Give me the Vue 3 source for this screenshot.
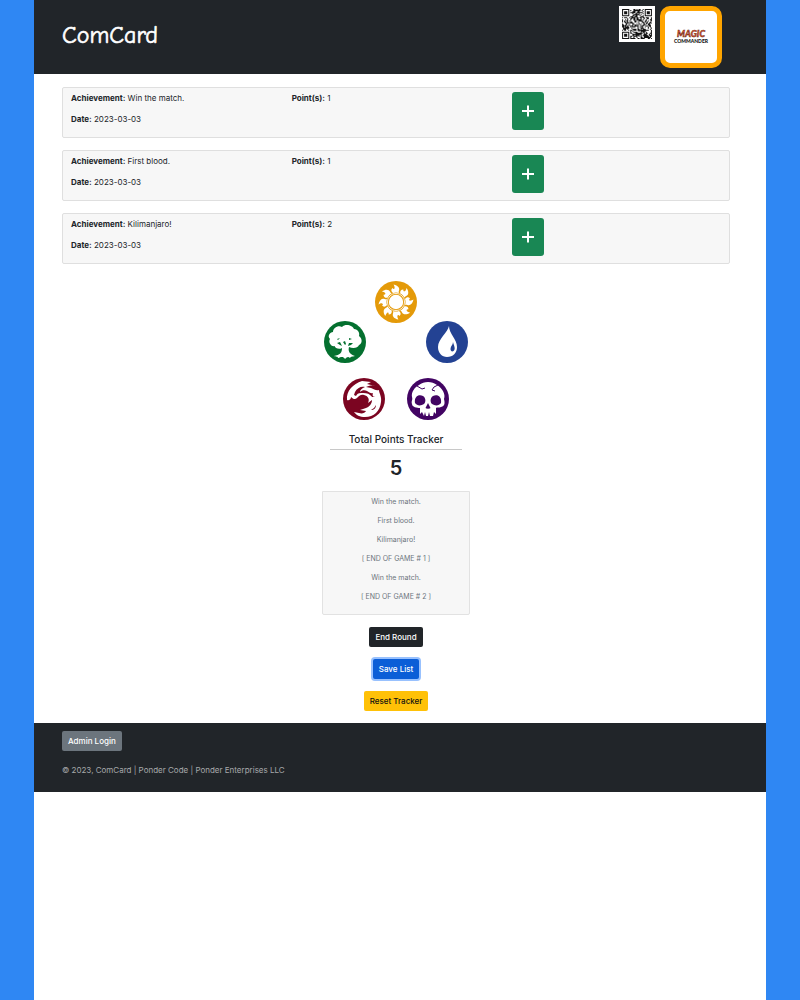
<script setup>
const achievements = [
  { name: 'Win the match.', date: '2023-03-03', points: 1 },
  { name: 'First blood.', date: '2023-03-03', points: 1 },
  { name: 'Kilimanjaro!', date: '2023-03-03', points: 2 },
]
const history = ['Win the match.', 'First blood.', 'Kilimanjaro!', '[ END OF GAME # 1 ]', 'Win the match.', '[ END OF GAME # 2 ]']
const rays = [0, 45, 90, 135, 180, 225, 270, 315]

const size = 29
function finder(x, y, ox, oy) {
  const dx = x - ox
  const dy = y - oy
  if (dx < -1 || dy < -1 || dx > 7 || dy > 7) return null
  const ring = Math.max(Math.abs(dx - 3), Math.abs(dy - 3))
  return ring === 3 || ring <= 1
}
let seed = 7
let qr = ''
for (let y = 0; y < size; y++) {
  for (let x = 0; x < size; x++) {
    seed = (seed * 16807) % 2147483647
    const f = finder(x, y, 0, 0) ?? finder(x, y, size - 7, 0) ?? finder(x, y, 0, size - 7)
    if (f === null ? seed % 100 < 52 : f) qr += `M${x} ${y}h1v1h-1z`
  }
}
</script>

<template>
  <div class="page">
    <div class="sheet">
      <header class="top">
        <h1 class="brand">ComCard</h1>
        <div class="badges">
          <svg class="qr" viewBox="-3 -3 35 35" role="img" aria-label="QR code">
            <path :d="qr" fill="#111" />
          </svg>
          <div class="logo">
            <svg viewBox="0 0 52 52" role="img" aria-label="Magic Commander">
              <text x="26" y="26" class="magic">MAGIC</text>
              <text x="26" y="32" class="commander">COMMANDER</text>
            </svg>
          </div>
        </div>
      </header>

      <main>
        <article v-for="a in achievements" :key="a.name" class="item">
          <div class="cell">
            <p><strong>Achievement:</strong> {{ a.name }}</p>
            <p><strong>Date:</strong> {{ a.date }}</p>
          </div>
          <p class="cell"><strong>Point(s):</strong> {{ a.points }}</p>
          <div class="cell">
            <button class="add" type="button" :aria-label="'Add ' + a.name">
              <svg viewBox="0 0 12 12"><path d="M6 0.5v11M0 6h12" stroke="#fff" stroke-width="2" /></svg>
            </button>
          </div>
        </article>

        <section class="tracker">
          <svg class="mana" viewBox="0 0 148 150" aria-hidden="true">
            <g transform="translate(74 25)">
              <circle r="21" fill="#e49a09" />
              <g fill="#fff">
                <path v-for="r in rays" :key="r" :transform="`rotate(${r})`" d="M-3 -9C-5 -10.500 -5.200 -12.500 -3.600 -14C-2.500 -12.600 -1.500 -13 -1.400 -14C-1.200 -15 -1.700 -16 -2.400 -17.500C2 -16.500 4 -14 3 -11.400C2.600 -10.200 2.600 -9.500 3 -9C1 -9.700 -1 -9.700 -3 -9Z" />
                <circle r="7.200" />
              </g>
              <circle r="8.600" fill="none" stroke="#fff" stroke-width=".8" />
            </g>
            <g transform="translate(23 65)">
              <circle r="21" fill="#04702f" />
              <path fill="#fff" d="M-3 6C-6 8-10 6-10.500 4C-14 5-17-0-15-3C-18-6-15-10-12-10C-12-14-7-17-3-15C1-19 8-16 9-13C13-13 15-9 14-6C18-3 17 2 14 3C13 6 8 7 4 5C3 9 4 12 10 14C7 15 6 14 5 16C3 14 2 15 0 17C-2 14-4 15-7 16C-7 14-9 15-11 14C-5 13-3 11-3 6Z" />
              <path fill="#04702f" d="M-8 1L-5 0L-3 4L-5 3ZM8 1L4 1L3 4L6 3ZM-2 0L0-1L1 2L0 3ZM-8-3l3-1-2 2zM4-4l3 1-3 1z" />
            </g>
            <g transform="translate(125 65)">
              <circle r="21" fill="#234293" />
              <path fill="#fff" d="M2-16C1-10-9-3-9 5C-9 11-5 15 0 15C6 15 10 11 10 5C10-3 2-8 2-16Z" />
              <path fill="#234293" d="M6 0C6 3 3.500 4 3.500 7C3.500 9 5 10 6.500 9C9 7 7 4 6 0Z" />
            </g>
            <g transform="translate(42 122)">
              <circle r="21" fill="#7b0521" />
              <path fill="#fff" d="M-17 1C-18-8-11-15-2-18L7-17L3-15L11-13C8-14 4-13 2-12L7-11C10-10 12-8 15-9C15-6 18-2 17 3C16 12 10 18 1 18C-4 18-8 16-10 13L-5 14C-2 15 1 14 2 12L-4 11L2 9C5 8 8 5 8 1L4 4C6 0 4-3 0-4C-3-5-5-3-7-1C-9 1-11 0-13-2C-13 0-15 2-17 1Z" />
              <path fill="#7b0521" d="M-9-7C-7-11-3-13 1-12C-2-11-4-9-4-7C-2-9 1-9 3-8C5-7 7-5 9-6C8-3 9-2 11-3C9-1 8-2 6-4C4-6 0-6-3-6C-6-6-7-5-8-3L-10-4ZM12 6L10 9L7 11C10 11 12 9 12 6Z" />
            </g>
            <g transform="translate(106 122)">
              <circle r="21" fill="#420463" />
              <path fill="#fff" d="M-9-14C-4-18 4-18 9-14C14-11 18-5 16 0C17 4 17 7 13 8C11 9 9 8 8 9L8 15L6 13L5 17L2 17L1 13L0 17L-2 17L-3 13L-4 17L-6 13L-8 15L-8 9C-11 9-16 8-16 5C-17 2-15 1-16-2C-17-7-13-12-9-14Z" />
              <path fill="none" stroke="#420463" stroke-width="1" d="M-11-13L-6-10L-3-11M10-14L6-12L4-9L7-8" />
              <path fill="#420463" d="M-13 4C-14-3-9-5-5-3C-2-1-2 3-4 5C-7 7-11 7-13 4ZM13 4C14-3 9-5 5-3C2-1 2 3 4 5C7 7 11 7 13 4ZM0 4L-2.500 9L-.5 10L0 9L.5 10L2.500 9Z" />
            </g>
          </svg>
          <div class="summary">
            <h2>Total Points Tracker</h2>
            <p class="total">5</p>
          </div>
          <div class="log">
            <p v-for="(line, i) in history" :key="i">{{ line }}</p>
          </div>
        </section>

        <div class="buttons">
          <button class="btn dark" type="button">End Round</button>
          <button class="btn primary" type="button">Save List</button>
          <button class="btn warning" type="button">Reset Tracker</button>
        </div>
      </main>

      <footer class="bottom">
        <button class="btn secondary" type="button">Admin Login</button>
        <p>© 2023, ComCard | Ponder Code | Ponder Enterprises LLC</p>
      </footer>
    </div>
  </div>
</template>

<style>
body {
  margin: 0;
  background: #2f87f3;
}
</style>

<style scoped>
* {
  box-sizing: border-box;
}
.page {
  padding: 0 34px;
  font-family: Inter, "Liberation Sans", sans-serif;
  font-size: 8px;
  line-height: 12px;
  color: #212529;
}
p, h1, h2 {
  margin: 0;
}
button {
  font-family: inherit;
  cursor: pointer;
}
.sheet {
  min-height: 100vh;
  background: #fff;
}
.top {
  display: flex;
  justify-content: space-between;
  padding: 6px 44px 6px 28px;
  background: #212529;
}
.brand {
  padding-top: 13px;
  font-family: "Comic Neue", "Patrick Hand", Lato, cursive;
  font-size: 24px;
  line-height: 32px;
  font-weight: 400;
  color: #fff;
  -webkit-text-stroke: 0.6px #fff;
}
.badges {
  display: flex;
  align-items: flex-start;
  gap: 5px;
}
.qr {
  width: 36px;
  height: 36px;
  background: #fff;
}
.logo {
  width: 62px;
  height: 62px;
  border: 5px solid #ffa500;
  border-radius: 10px;
  background: #fff;
}
.logo svg {
  display: block;
}
.magic {
  font: italic 900 9px Lato, sans-serif;
  fill: #e8532a;
  stroke: #4a1c12;
  stroke-width: 0.4px;
  text-anchor: middle;
}
.commander {
  font: 900 5px Lato, sans-serif;
  fill: #111;
  text-anchor: middle;
}
main {
  padding: 13px 36px 12px 28px;
}
.item {
  display: grid;
  grid-template-columns: repeat(3, 1fr);
  height: 51px;
  margin-bottom: 12px;
  padding: 4px 4px 4px 0;
  border: 1px solid #dfdfdf;
  border-radius: 2px;
  background: #f7f7f7;
}
.cell {
  padding-left: 8px;
}
.cell p + p {
  margin-top: 9px;
}
.add {
  display: flex;
  align-items: center;
  justify-content: center;
  width: 32px;
  height: 38px;
  padding: 0;
  border: 0;
  border-radius: 3px;
  background: #198754;
}
.add svg {
  width: 12px;
  height: 12px;
}
.tracker {
  width: 148px;
  margin: 0 auto;
  padding-top: 1px;
  text-align: center;
}
.mana {
  display: block;
  width: 148px;
  height: 150px;
}
.summary {
  padding: 5px 8px 11px;
}
h2 {
  padding-bottom: 3px;
  border-bottom: 1px solid #c8c8c8;
  font-size: 10px;
  line-height: 14px;
  font-weight: 500;
}
.total {
  padding-top: 6px;
  font-size: 20px;
  line-height: 24px;
  font-weight: 600;
}
.log {
  padding: 4px 8px;
  border: 1px solid #e2e2e2;
  border-radius: 0 0 2px 2px;
  background: #f7f7f7;
  font-size: 7px;
  color: #6c757d;
}
.log p {
  padding-bottom: 7px;
}
.buttons {
  display: flex;
  flex-direction: column;
  align-items: center;
  gap: 12px;
  padding-top: 12px;
}
.btn {
  height: 20px;
  padding: 0 6px;
  border: 0;
  border-radius: 2px;
  font-size: 8px;
  line-height: 12px;
  font-weight: 500;
  color: #fff;
}
.dark {
  background: #212529;
}
.primary {
  background: #0b5ed7;
  box-shadow: 0 0 0 2px #98c1fe;
}
.warning {
  background: #ffc107;
  color: #111;
}
.secondary {
  background: #6c757d;
}
.bottom {
  padding: 8px 28px 16px;
  background: #212529;
  color: #a7a9ab;
}
.bottom p {
  padding-top: 13px;
}
</style>
